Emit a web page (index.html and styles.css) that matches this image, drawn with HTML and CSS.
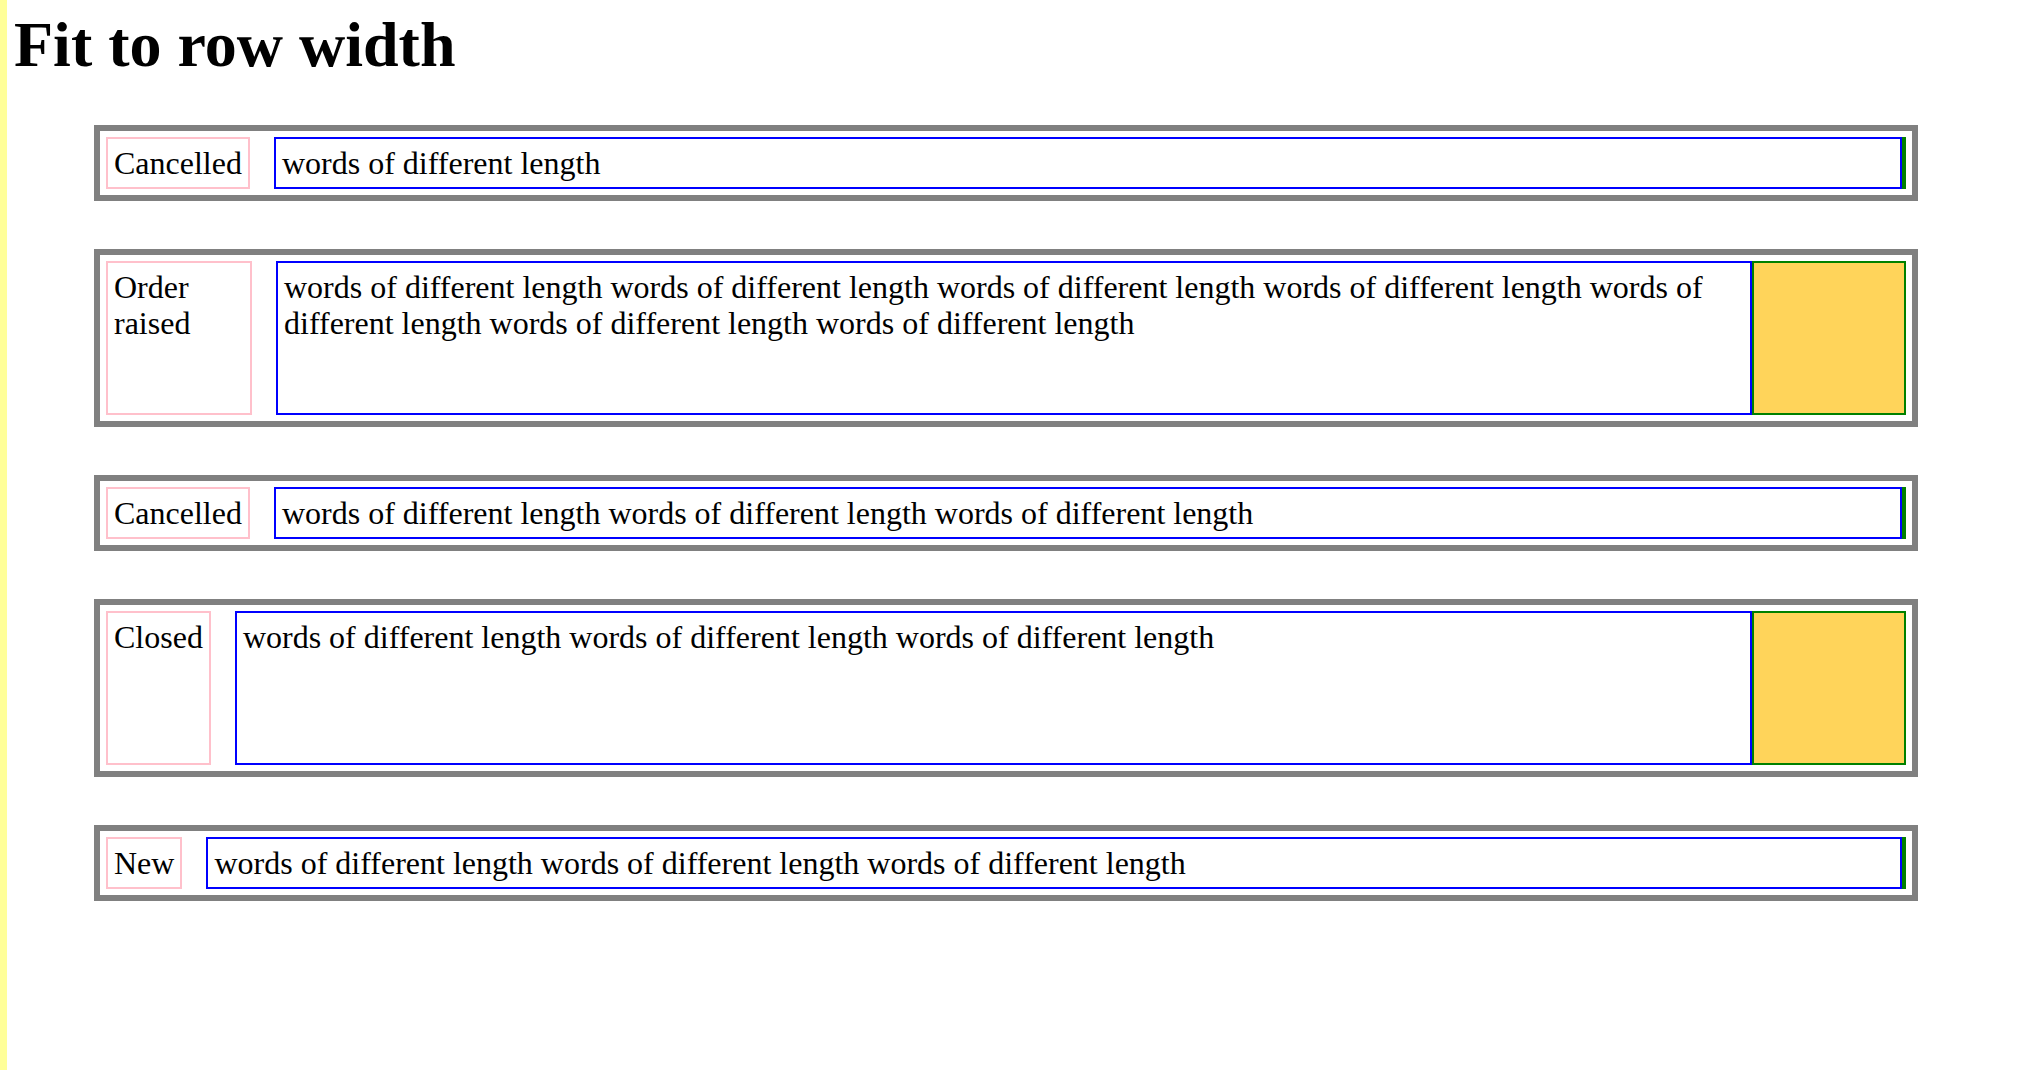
FILE: index.html
```html
<!DOCTYPE html>
<html lang="en">
<head>
<meta charset="utf-8">
<title>Fit to row width</title>
<link rel="stylesheet" href="styles.css">
</head>
<body>
<h1 class="title">Fit to row width</h1>
<div class="row">
  <div class="label">Cancelled</div>
  <div class="text">words of different length</div>
  <div class="aside"></div>
</div>
<div class="row">
  <div class="label label-wrap">Order raised</div>
  <div class="text">words of different length words of different length words of different length words of different length words of different length words of different length words of different length</div>
  <div class="aside aside-filled"></div>
</div>
<div class="row">
  <div class="label">Cancelled</div>
  <div class="text">words of different length words of different length words of different length</div>
  <div class="aside"></div>
</div>
<div class="row">
  <div class="label">Closed</div>
  <div class="text">words of different length words of different length words of different length</div>
  <div class="aside aside-filled"></div>
</div>
<div class="row">
  <div class="label">New</div>
  <div class="text">words of different length words of different length words of different length</div>
  <div class="aside"></div>
</div>
</body>
</html>
```
FILE: styles.css
```css
html {
  background: #ffffff;
}
body {
  margin: 0;
  min-height: 100vh;
  box-sizing: border-box;
  border-left: 7px solid #ffff99;
  padding: 8px 0 0 7px;
  font-family: "Liberation Serif", "Times New Roman", serif;
  font-size: 32px;
  color: #000;
}
.title {
  margin: 0 0 43px 0;
  font-size: 64px;
  font-weight: bold;
}
.row {
  display: flex;
  align-items: stretch;
  margin: 0 108px 48px 80px;
  border: 6px solid #808080;
  padding: 6px;
  line-height: 36px;
}
.label {
  flex: none;
  border: 2px solid #ffc0cb;
  padding: 6px;
  margin-right: 24px;
}
.label-wrap {
  width: 130px;
}
.text {
  flex: 1 1 auto;
  min-width: 0;
  border: 2px solid #0000ff;
  padding: 6px;
}
.aside {
  flex: none;
  width: 0;
  border: 2px solid #008000;
}
.aside-filled {
  width: 150px;
  height: 150px;
  background: #ffd45a;
}
```
